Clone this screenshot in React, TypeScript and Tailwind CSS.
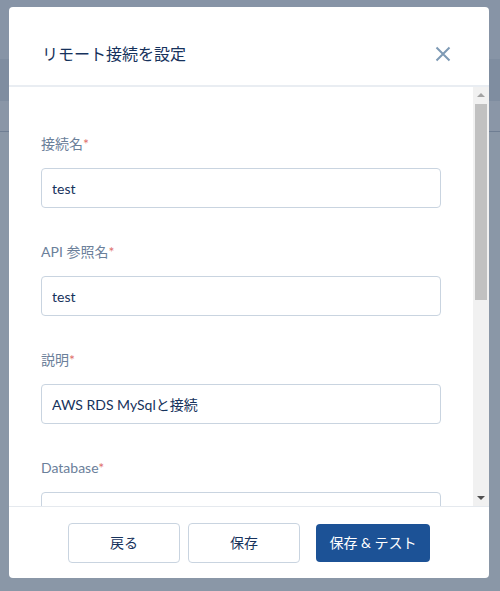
import React from "react";

const fields = [
  { label: "接続名", value: "test" },
  { label: "API 参照名", value: "test" },
  { label: "説明", value: "AWS RDS MySqlと接続" },
  { label: "Database", value: "" },
];

const font = "font-['Lato','Noto_Sans_CJK_JP',sans-serif]";

// classic scrollbar, drawn because the headless browser hides its own
function ScrollBar() {
  return (
    <div className="flex w-4 shrink-0 flex-col bg-[#f1f1f1]">
      <div className="flex h-4 items-center justify-center">
        <div className="h-0 w-0 border-x-[4px] border-b-[4px] border-x-transparent border-b-[#a3a3a3]" />
      </div>
      <div className="mx-[2px] mt-px h-[196px] bg-[#c1c1c1]" />
      <div className="flex-1" />
      <div className="flex h-4 items-center justify-center">
        <div className="h-0 w-0 border-x-[4px] border-t-[4px] border-x-transparent border-t-[#505050]" />
      </div>
    </div>
  );
}

export default function App() {
  return (
    <div className={`relative h-[591px] w-[500px] overflow-hidden bg-[#8a97a7] ${font}`}>
      {/* page behind the overlay */}
      <div className="h-[59px] bg-[#8794a6]" />
      <div className="h-[42px] bg-[#7f8da0]" />
      <div className="h-[30px] bg-[#8a96a7]" />
      <div className="h-px bg-[#6f7e93]" />

      {/* modal */}
      <div className="absolute left-[9px] top-[7px] flex h-[571px] w-[480px] flex-col overflow-hidden rounded-[4px] bg-white">
        <header className="flex h-[80px] shrink-0 items-center justify-between border-b-2 border-[#e9edf2] pl-[33px] pr-[36px] pt-[16px]">
          <h2 className="text-base text-[#16325c]">リモート接続を設定</h2>
          <button className="flex h-5 w-5 items-center justify-center text-[#7e9ab5]">
            <svg width="16" height="16" viewBox="0 0 16 16" fill="none" stroke="currentColor" strokeWidth="2">
              <path d="M1.5 1.5l13 13M14.5 1.5l-13 13" />
            </svg>
          </button>
        </header>

        <div className="flex min-h-0 flex-1">
          <div className="min-w-0 flex-1 overflow-hidden">
            <div className="flex flex-col gap-[34px] px-[32px] pt-[47px]">
              {fields.map((f) => (
                <div key={f.label} className="flex flex-col gap-[14px]">
                  <label className="h-5 text-sm leading-5 text-[#6b809a]">
                    {f.label}
                    <span className="text-[#e0716c]">*</span>
                  </label>
                  <input
                    readOnly
                    value={f.value}
                    className="h-10 w-full rounded-[4px] border border-[#c9d4e0] px-[10px] text-sm text-[#16325c] outline-none"
                  />
                </div>
              ))}
            </div>
          </div>
          <ScrollBar />
        </div>

        <footer className="flex h-[72px] shrink-0 items-center justify-center border-t border-[#e5e9ee]">
          <button className="h-10 w-[112px] rounded-[4px] border border-[#c9d4e0] bg-white text-sm text-[#16325c]">
            戻る
          </button>
          <button className="ml-2 h-10 w-[112px] rounded-[4px] border border-[#c9d4e0] bg-white text-sm text-[#16325c]">
            保存
          </button>
          <button className="ml-4 h-[38px] w-[114px] rounded-[4px] bg-[#1c5296] text-sm text-white">
            保存 &amp; テスト
          </button>
        </footer>
      </div>
    </div>
  );
}
